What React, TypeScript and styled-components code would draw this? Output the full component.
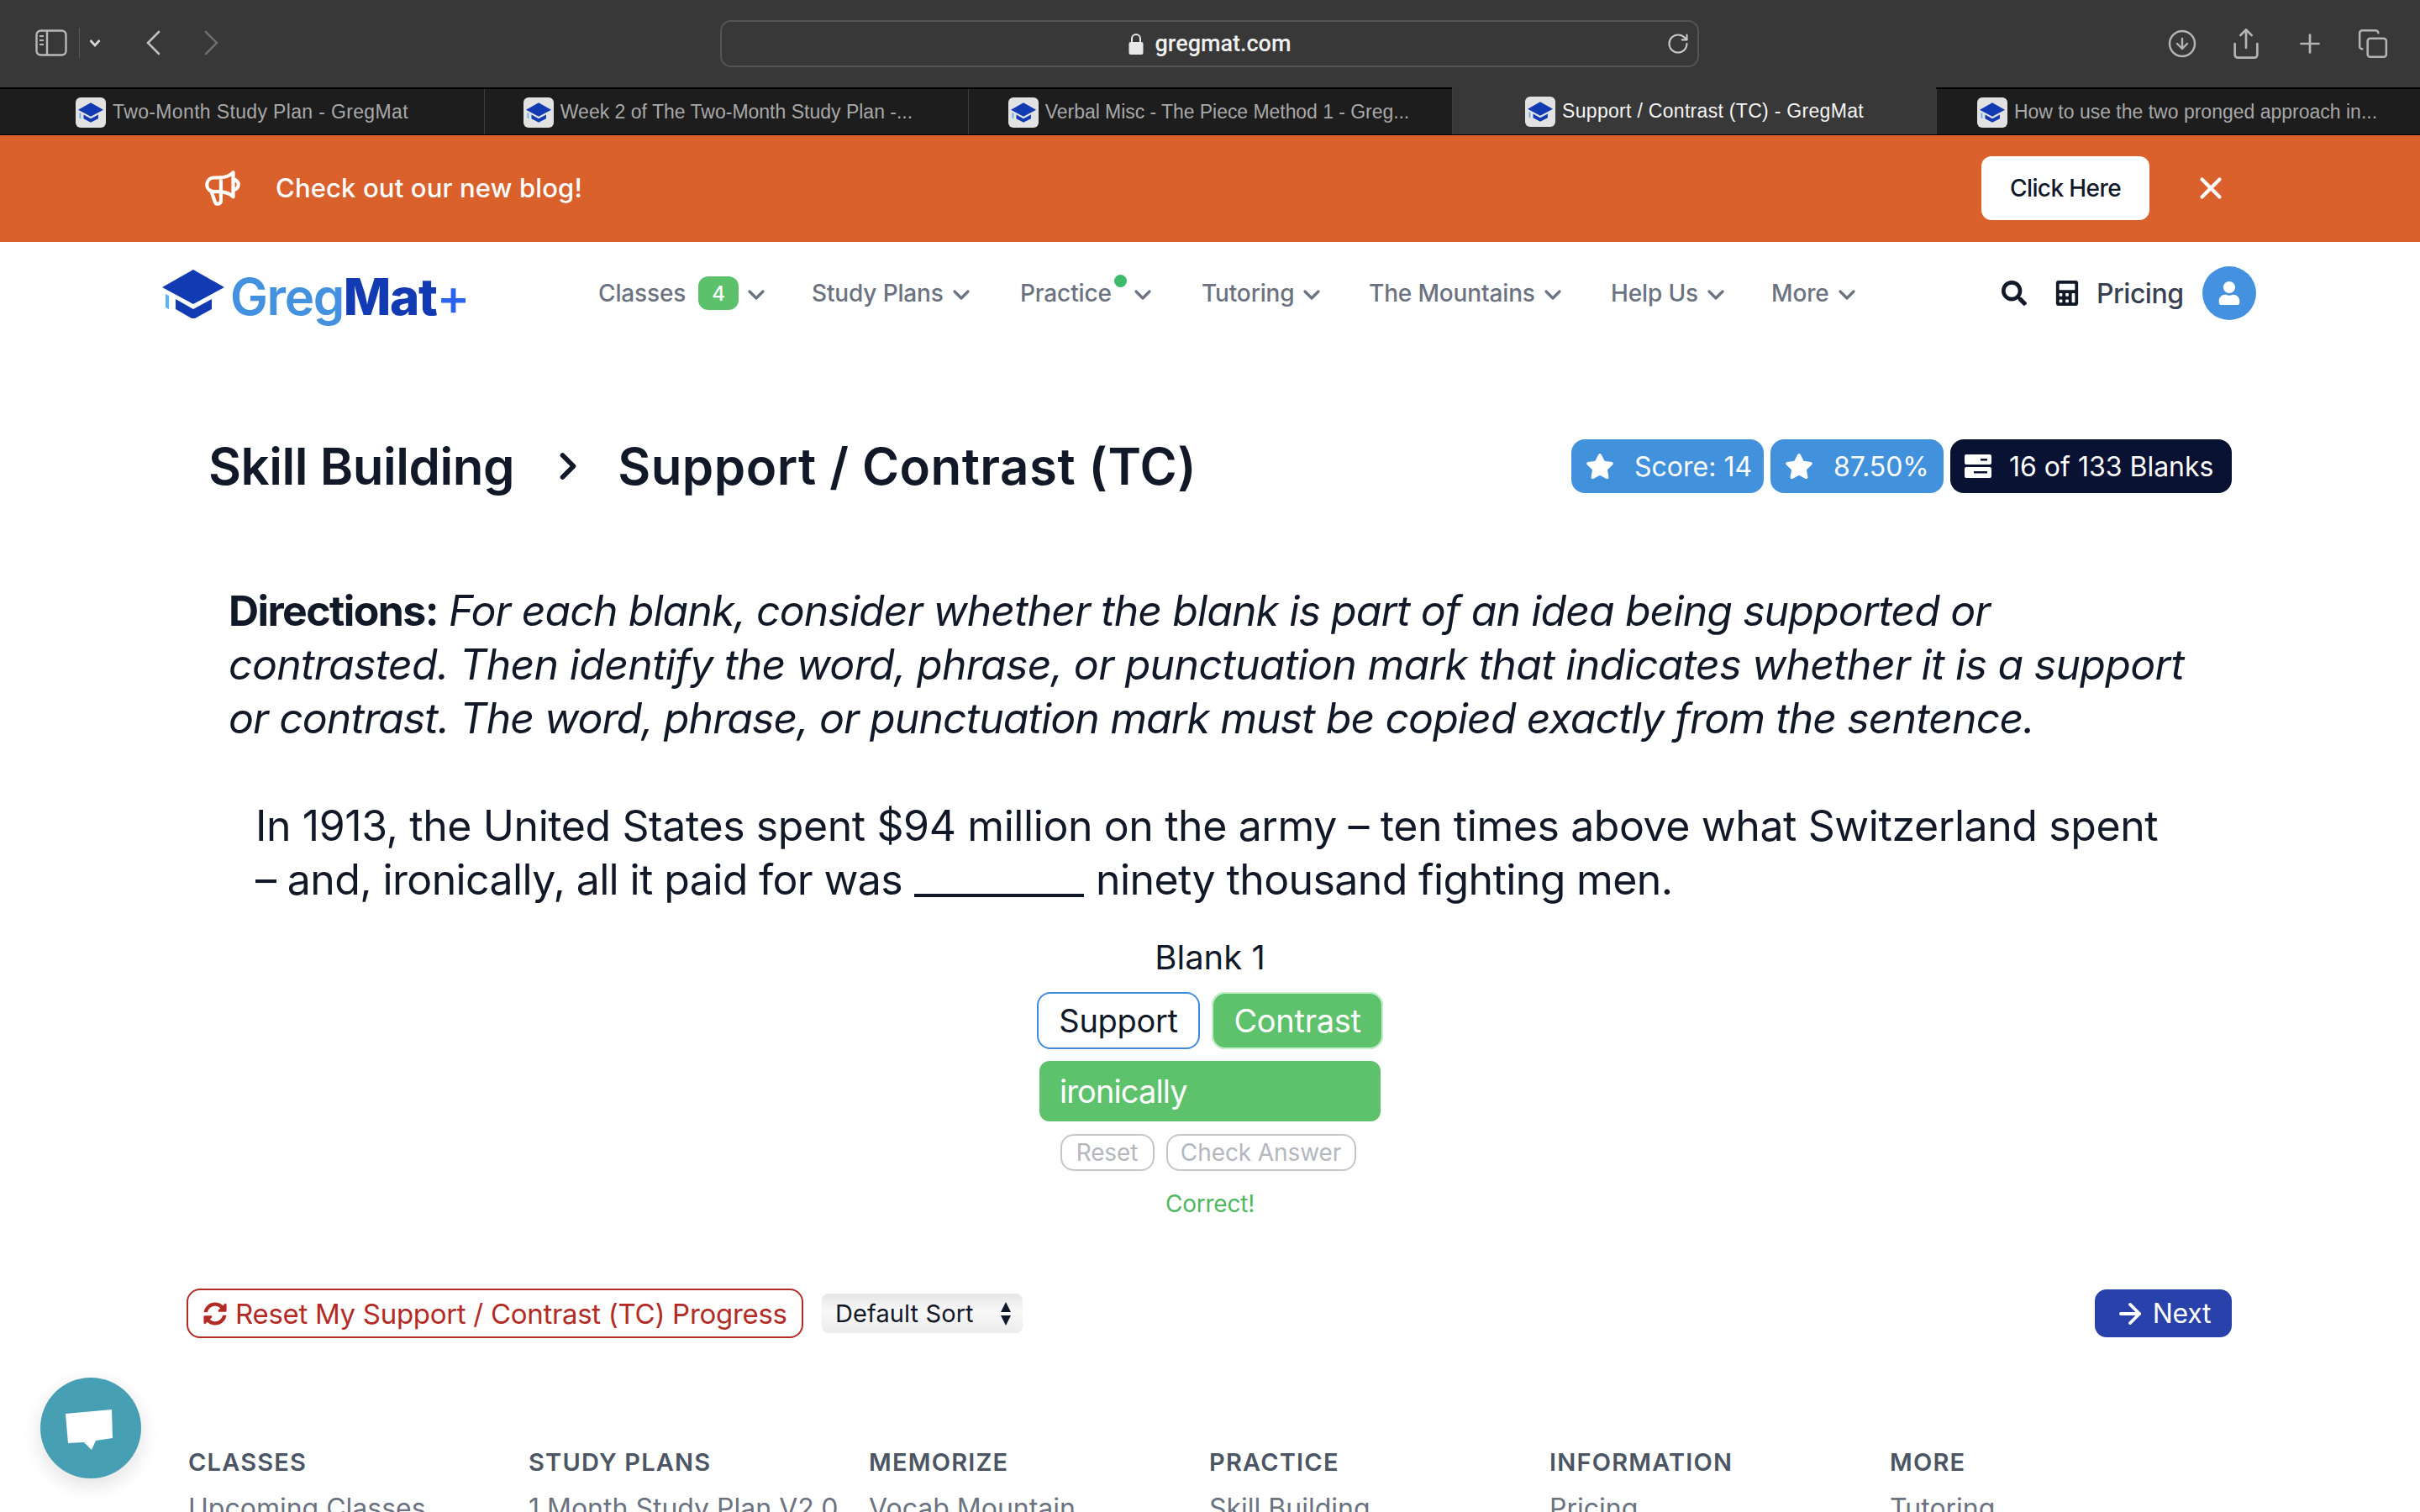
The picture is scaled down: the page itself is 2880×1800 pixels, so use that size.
import React from "react";
import styled, { createGlobalStyle } from "styled-components";
import { ChevronDown, ChevronRight, RotateCw, CircleArrowDown, Share, Plus, Copy, X, ArrowRight } from "lucide-react";
import { FaSearch, FaCalculator, FaUser, FaStar, FaSyncAlt } from "react-icons/fa";
import { HiOutlineSpeakerphone } from "react-icons/hi";

const Global = createGlobalStyle`
  html, body { margin: 0; padding: 0; width: 2880px; height: 1800px; overflow: hidden; background: #fff; }
  * { box-sizing: border-box; }
  body { font-family: "Inter", "Noto Sans", sans-serif; color: #111827; }
`;

const Page = styled.div`width: 2880px; height: 1800px; overflow: hidden; position: relative; display: flex; flex-direction: column;`;

const Toolbar = styled.div`
  height: 104px; background: #383838; display: grid; grid-template-columns: 857px 1165px 1fr; align-items: center; color: #b4b4b4; flex: none;
`;
const ToolLeft = styled.div`display: flex; align-items: center; padding-left: 42px; height: 100%; padding-bottom: 2px;`;
const Divider = styled.div`width: 1px; height: 36px; background: #5a5a5a; margin: 0 11px 0 14px;`;
const NavArrow = styled.span<{ $dim?: boolean }>`display: flex; margin-left: ${p => (p.$dim ? "52px" : "53px")}; color: ${p => (p.$dim ? "#6e6e6e" : "#c0c0c0")};`;
const AddressBar = styled.div`
  height: 56px; border: 2px solid #545454; border-radius: 13px; display: flex; align-items: center; justify-content: center; color: #f0f0f0; font: 500 27px "Roboto", sans-serif; position: relative; gap: 14px;
`;
const Reload = styled.span`position: absolute; right: 9px; display: flex; color: #c8c8c8;`;
const ToolRight = styled.div`display: flex; align-items: center; justify-content: flex-end; gap: 38px; padding-right: 37px;`;

const Tabs = styled.div`height: 57px; flex: none; display: grid; grid-template-columns: repeat(5, 576px); background: #1d1d1d; border-top: 2px solid #000; border-bottom: 1px solid #000;`;
const Tab = styled.div<{ $active?: boolean; $ls: number; $pr: number }>`
  display: flex; align-items: center; justify-content: center; gap: 8px; font: ${p => (p.$active ? 500 : 400)} 23px "Liberation Sans", sans-serif;
  color: ${p => (p.$active ? "#f4f4f4" : "#a8a8a8")}; background: ${p => (p.$active ? "#383838" : "transparent")};
  border-left: 1px solid #3e3e3e; white-space: nowrap; padding-top: 1px;
  letter-spacing: ${p => p.$ls}px; padding-right: ${p => p.$pr}px;
  ${p => p.$active && "margin-top: -2px;"}
  &:first-child { border-left: 0; }
`;
const Favicon = styled.span`width: 36px; height: 36px; background: #e2e2e2; border-radius: 6px; display: flex; align-items: center; justify-content: center; flex: none;`;

const Banner = styled.div`height: 127px; flex: none; background: #db612c; display: flex; align-items: center; color: #fff; padding: 0 0 2px 240px;`;
const BannerText = styled.div`font-size: 31px; font-weight: 500; letter-spacing: 0.15px; margin-left: 38px;`;
const BannerBtn = styled.div`margin-left: auto; width: 200px; height: 76px; background: #fff; border-radius: 12px; color: #111827; font-size: 28px; font-weight: 500; letter-spacing: -0.6px; display: flex; align-items: center; justify-content: center;`;
const BannerClose = styled.span`display: flex; margin: 0 228px 0 52px; color: #fff;`;

const Nav = styled.div`height: 128px; flex: none; display: grid; grid-template-columns: 522px 254px 248px 216px 199px 288px 191px 274px auto; align-items: center; padding: 0 0 6px 190px;`;
const Logo = styled.div`display: flex; align-items: center; gap: 7px; margin-top: 2px; padding-left: 3px;`;
const LogoText = styled.div`font-size: 60px; font-weight: 600; letter-spacing: -1.4px; color: #4492df; line-height: 1; margin-top: 5px;`;
const LogoMat = styled.span`color: #123ab3; font-weight: 800;`;
const LogoPlus = styled.span`color: #2a63f0; font-weight: 500;`;
const NavItem = styled.div`display: flex; align-items: center; font-size: 28px; font-weight: 500; letter-spacing: -0.15px; color: #6b7280; white-space: nowrap; position: relative;`;
const Count = styled.span`width: 48px; height: 40px; background: #5dc06a; border-radius: 12px; color: #fff; font-size: 24px; display: flex; align-items: center; justify-content: center; margin-left: 15px;`;
const Dot = styled.span`position: absolute; width: 15px; height: 15px; background: #3dbb6a; border-radius: 50%; left: 112px; top: -5px;`;
const Chev = styled.span<{ $far?: boolean }>`display: flex; margin-left: ${p => (p.$far ? "21px" : "5px")}; margin-top: 3px; color: #6b7280;`;
const NavRight = styled.div`display: flex; align-items: center; color: #111827;`;
const CalcIcon = styled.span`display: flex; margin-left: 33px;`;
const Pricing = styled.span`font-size: 32px; font-weight: 500; letter-spacing: -0.5px; color: #374151; margin: 0 23px 0 20px;`;
const Avatar = styled.span`width: 64px; height: 64px; background: #4492df; border-radius: 50%; display: flex; align-items: center; justify-content: center; color: #fff;`;

const TitleRow = styled.div`display: flex; align-items: center; height: 64px; margin-top: 107px; padding: 0 224px 0 248px; flex: none;`;
const Title = styled.h1<{ $ls: number }>`margin: 0; font-size: 60px; font-weight: 600; letter-spacing: ${p => p.$ls}px; color: #111827; white-space: nowrap;`;
const Crumb = styled.span`display: flex; margin: 0 33px 0 38px; color: #111827;`;
const Chips = styled.div`margin-left: auto; display: flex; gap: 8px;`;
const Chip = styled.div<{ $dark?: boolean; $w: number }>`
  width: ${p => p.$w}px; height: 64px; border-radius: 16px; background: ${p => (p.$dark ? "#0a1233" : "#4291dd")}; color: #fff; display: flex; align-items: center; font-size: 32px; padding-left: 16px; white-space: nowrap;
`;
const ChipIcon = styled.span<{ $gap: number }>`display: flex; margin-right: ${p => p.$gap}px; margin-left: 1px;`;

const Directions = styled.div`margin: 108px 0 0; padding-left: 272px; font-size: 50px; line-height: 64px; white-space: nowrap; color: #111827; flex: none;`;
const DirLine = styled.div<{ $ls: number }>`letter-spacing: ${p => p.$ls}px; font-style: italic;`;
const DirLabel = styled.b`font-style: normal; letter-spacing: -1.6px;`;
const Question = styled.div`margin: 64px 0 0; padding-left: 304px; font-size: 50px; line-height: 64px; white-space: nowrap; color: #111827; flex: none;`;
const QuestionLine = styled.div<{ $ls: number }>`letter-spacing: ${p => p.$ls}px;`;
const BlankLine = styled.span`display: inline-block; width: 202px; height: 4px; background: #111827; margin: 0 14px 0 14px; vertical-align: -3px;`;

const Quiz = styled.div`display: flex; flex-direction: column; align-items: center; margin-top: 36px; flex: none;`;
const BlankLabel = styled.div`font-size: 40px; line-height: 50px; letter-spacing: 0;`;
const Choices = styled.div`display: flex; gap: 14px; margin-top: 16px;`;
const Choice = styled.div<{ $on?: boolean }>`
  height: 68px; border-radius: 16px; font-size: 38px; letter-spacing: -0.3px; display: flex; align-items: center; justify-content: center;
  ${p => p.$on ? "width: 204px; background: #5ec16c; color: #fff; box-shadow: 0 0 0 2px #c6f0cc inset;" : "width: 194px; border: 2px solid #3f8bd9; color: #111827;"}
`;
const Answer = styled.div`width: 406px; height: 72px; margin-top: 14px; background: #5ec16c; border-radius: 12px; color: #fff; font-size: 38px; letter-spacing: -0.9px; display: flex; align-items: center; padding-left: 24px;`;
const SmallRow = styled.div`display: flex; gap: 14px; margin-top: 15px; margin-left: -5px;`;
const SmallBtn = styled.div<{ $w: number }>`width: ${p => p.$w}px; height: 44px; border: 2px solid #c4c6cc; border-radius: 16px; color: #b4b7bd; font-size: 28px; letter-spacing: -0.1px; display: flex; align-items: center; justify-content: center;`;
const Correct = styled.div`font-size: 28px; color: #4fb85f; margin-top: 19px; line-height: 40px; letter-spacing: -0.2px;`;

const Actions = styled.div`display: flex; align-items: center; margin-top: 81px; padding: 0 224px 0 222px; flex: none;`;
const ResetBtn = styled.div`width: 734px; height: 59px; border: 2px solid #b22b25; border-radius: 16px; color: #b22b25; font-size: 33px; letter-spacing: -0.3px; display: flex; align-items: center; padding-left: 18px; gap: 10px; white-space: nowrap;`;
const SortBox = styled.div`width: 239px; height: 47px; margin-left: 22px; border-radius: 8px; background: linear-gradient(#e6e6e6, #f8f8f8 45%, #ececec); display: flex; align-items: center; justify-content: space-between; padding: 0 14px 0 16px; font-size: 29px; letter-spacing: 0.1px; color: #111827;`;
const Updown = styled.span`display: flex; flex-direction: column; gap: 4px;`;
const NextBtn = styled.div`margin-left: auto; width: 163px; height: 57px; background: #2841ab; border-radius: 14px; color: #fff; font-size: 32px; letter-spacing: -0.3px; display: flex; align-items: center; justify-content: center; gap: 8px; padding-right: 2px;`;

const Footer = styled.div`display: grid; grid-template-columns: repeat(6, 405px); padding-left: 224px; margin-top: 130px; flex: none;`;
const FootHead = styled.div`font-size: 29px; font-weight: 600; color: #4b5563; line-height: 36px; letter-spacing: 1.2px;`;
const FootLink = styled.div`font-size: 32px; color: #6b7280; line-height: 40px; margin-top: 17px; letter-spacing: 0; white-space: nowrap;`;

const ChatBubble = styled.div`position: absolute; left: 48px; top: 1640px; width: 120px; height: 120px; border-radius: 50%; background: #479fb3; box-shadow: 0 8px 24px rgba(0,0,0,.12); display: flex; align-items: center; justify-content: center;`;

const Fav = () => (
  <Favicon>
    <svg width="30" height="30" viewBox="0 0 74 58">
      <path d="M37 0 L74 21 L37 41 L0 21Z" fill="#123ab3" />
      <path d="M16 35 L37 47 L59 35 V47 L37 58 L16 47Z" fill="#123ab3" />
      <path d="M4 29 L8 31 V47 L4 45Z" fill="#5aa9ef" />
    </svg>
  </Favicon>
);

const tabs = [
  { t: "Two-Month Study Plan - GregMat", ls: 0.35, pr: 0 },
  { t: "Week 2 of The Two-Month Study Plan -...", ls: 0, pr: 20 },
  { t: "Verbal Misc - The Piece Method 1 - Greg...", ls: -0.05, pr: 4 },
  { t: "Support / Contrast (TC) - GregMat", ls: 0.3, pr: 0 },
  { t: "How to use the two pronged approach in...", ls: 0, pr: 3 },
];

const footer = [
  ["CLASSES", "Upcoming Classes"],
  ["STUDY PLANS", "1 Month Study Plan V2.0"],
  ["MEMORIZE", "Vocab Mountain"],
  ["PRACTICE", "Skill Building"],
  ["INFORMATION", "Pricing"],
  ["MORE", "Tutoring"],
];

const navItems = ["Study Plans", "Practice", "Tutoring", "The Mountains", "Help Us", "More"];
const Down = ({ far }: { far?: boolean }) => <Chev $far={far}><ChevronDown size={32} strokeWidth={2.4} /></Chev>;

export default function App() {
  return (
    <Page>
      <Global />
      <Toolbar>
        <ToolLeft>
          <svg width="38" height="32" viewBox="0 0 38 32" fill="none" stroke="#b8b8b8" strokeWidth="2.4">
            <rect x="1.5" y="1.5" width="35" height="29" rx="5" />
            <path d="M14 2 V30" />
            <path d="M5 8 H10 M5 13 H10 M5 18 H10" strokeWidth="2" />
          </svg>
          <Divider />
          <svg width="14" height="10" viewBox="0 0 14 10" fill="none" stroke="#d8d8d8" strokeWidth="2.6"><path d="M1.5 2 L7 8 L12.5 2" /></svg>
          <NavArrow>
            <svg width="18" height="30" viewBox="0 0 18 30" fill="none" stroke="currentColor" strokeWidth="2.6" strokeLinecap="round"><path d="M16 2 L3 15 L16 28" /></svg>
          </NavArrow>
          <NavArrow $dim>
            <svg width="18" height="30" viewBox="0 0 18 30" fill="none" stroke="currentColor" strokeWidth="2.6" strokeLinecap="round"><path d="M2 2 L15 15 L2 28" /></svg>
          </NavArrow>
        </ToolLeft>
        <AddressBar>
          <svg width="18" height="26" viewBox="0 0 18 26"><path d="M4 11V7a5 5 0 0 1 10 0v4" fill="none" stroke="#e8e8e8" strokeWidth="2" /><rect x="0.5" y="11" width="17" height="15" rx="2" fill="#e8e8e8" /></svg>
          gregmat.com
          <Reload><RotateCw size={28} strokeWidth={1.8} /></Reload>
        </AddressBar>
        <ToolRight>
          <CircleArrowDown size={36} strokeWidth={1.6} />
          <Share size={40} strokeWidth={1.6} />
          <Plus size={36} strokeWidth={1.8} />
          <Copy size={38} strokeWidth={1.6} />
        </ToolRight>
      </Toolbar>
      <Tabs>
        {tabs.map((t, i) => (
          <Tab key={t.t} $active={i === 3} $ls={t.ls} $pr={t.pr}><Fav />{t.t}</Tab>
        ))}
      </Tabs>
      <Banner>
        <HiOutlineSpeakerphone size={50} />
        <BannerText>Check out our new blog!</BannerText>
        <BannerBtn>Click Here</BannerBtn>
        <BannerClose><X size={42} strokeWidth={2.4} /></BannerClose>
      </Banner>
      <Nav>
        <Logo>
          <svg width="74" height="58" viewBox="0 0 74 58">
            <path d="M37 0 L74 21 L37 41 L0 21Z" fill="#123ab3" />
            <path d="M16 35 L37 47 L59 35 V47 L39 58 H35 L16 47Z" fill="#123ab3" />
            <path d="M4 29 L8 31 V47 L4 45Z" fill="#59b4f5" />
          </svg>
          <LogoText>Greg<LogoMat>Mat</LogoMat><LogoPlus>+</LogoPlus></LogoText>
        </Logo>
        <NavItem>Classes<Count>4</Count><Down /></NavItem>
        {navItems.map(n => (
          <NavItem key={n}>{n}{n === "Practice" && <Dot />}<Down far={n === "Practice"} /></NavItem>
        ))}
        <NavRight>
          <FaSearch size={30} />
          <CalcIcon><FaCalculator size={30} /></CalcIcon>
          <Pricing>Pricing</Pricing>
          <Avatar><FaUser size={28} /></Avatar>
        </NavRight>
      </Nav>
      <TitleRow>
        <Title $ls={-0.45}>Skill Building</Title>
        <Crumb><ChevronRight size={52} strokeWidth={2.6} /></Crumb>
        <Title $ls={0.45}>Support / Contrast (TC)</Title>
        <Chips>
          <Chip $w={229}><ChipIcon $gap={24}><FaStar size={34} /></ChipIcon>Score: 14</Chip>
          <Chip $w={206}><ChipIcon $gap={24}><FaStar size={34} /></ChipIcon>87.50%</Chip>
          <Chip $w={335} $dark>
            <ChipIcon $gap={21}>
              <svg width="32" height="28" viewBox="0 0 32 28" fill="#fff">
                <path fillRule="evenodd" d="M2 0 H30 a2 2 0 0 1 2 2 V10 a2 2 0 0 1 -2 2 H2 a2 2 0 0 1 -2 -2 V2 a2 2 0 0 1 2 -2Z M19 5 V7.5 H27 V5Z" />
                <path fillRule="evenodd" d="M2 15 H30 a2 2 0 0 1 2 2 V26 a2 2 0 0 1 -2 2 H2 a2 2 0 0 1 -2 -2 V17 a2 2 0 0 1 2 -2Z M11 20 V22.5 H27 V20Z" />
              </svg>
            </ChipIcon>
            16 of 133 Blanks
          </Chip>
        </Chips>
      </TitleRow>
      <Directions>
        <DirLine $ls={-0.93}><DirLabel>Directions:</DirLabel> For each blank, consider whether the blank is part of an idea being supported or</DirLine>
        <DirLine $ls={-0.7}>contrasted. Then identify the word, phrase, or punctuation mark that indicates whether it is a support</DirLine>
        <DirLine $ls={-0.93}>or contrast. The word, phrase, or punctuation mark must be copied exactly from the sentence.</DirLine>
      </Directions>
      <Question>
        <QuestionLine $ls={-0.41}>In 1913, the United States spent $94 million on the army – ten times above what Switzerland spent</QuestionLine>
        <QuestionLine $ls={-0.62}>– and, ironically, all it paid for was<BlankLine />ninety thousand fighting men.</QuestionLine>
      </Question>
      <Quiz>
        <BlankLabel>Blank 1</BlankLabel>
        <Choices>
          <Choice>Support</Choice>
          <Choice $on>Contrast</Choice>
        </Choices>
        <Answer>ironically</Answer>
        <SmallRow>
          <SmallBtn $w={112}>Reset</SmallBtn>
          <SmallBtn $w={226}>Check Answer</SmallBtn>
        </SmallRow>
        <Correct>Correct!</Correct>
      </Quiz>
      <Actions>
        <ResetBtn><FaSyncAlt size={28} />Reset My Support / Contrast (TC) Progress</ResetBtn>
        <SortBox>
          Default Sort
          <Updown>
            <svg width="12" height="12" viewBox="0 0 12 12"><path d="M6 0 L12 12 H0Z" fill="#111827" /></svg>
            <svg width="12" height="12" viewBox="0 0 12 12"><path d="M6 12 L12 0 H0Z" fill="#111827" /></svg>
          </Updown>
        </SortBox>
        <NextBtn><ArrowRight size={38} strokeWidth={2.4} />Next</NextBtn>
      </Actions>
      <Footer>
        {footer.map(([h, l]) => (
          <div key={h}>
            <FootHead>{h}</FootHead>
            <FootLink>{l}</FootLink>
          </div>
        ))}
      </Footer>
      <ChatBubble>
        <svg width="60" height="52" viewBox="2 -2 60 52"><path d="M2 7 L57 2 L58 36 L38 39 L33 50 L24 41 L5 42Z" fill="#fff" /></svg>
      </ChatBubble>
    </Page>
  );
}
